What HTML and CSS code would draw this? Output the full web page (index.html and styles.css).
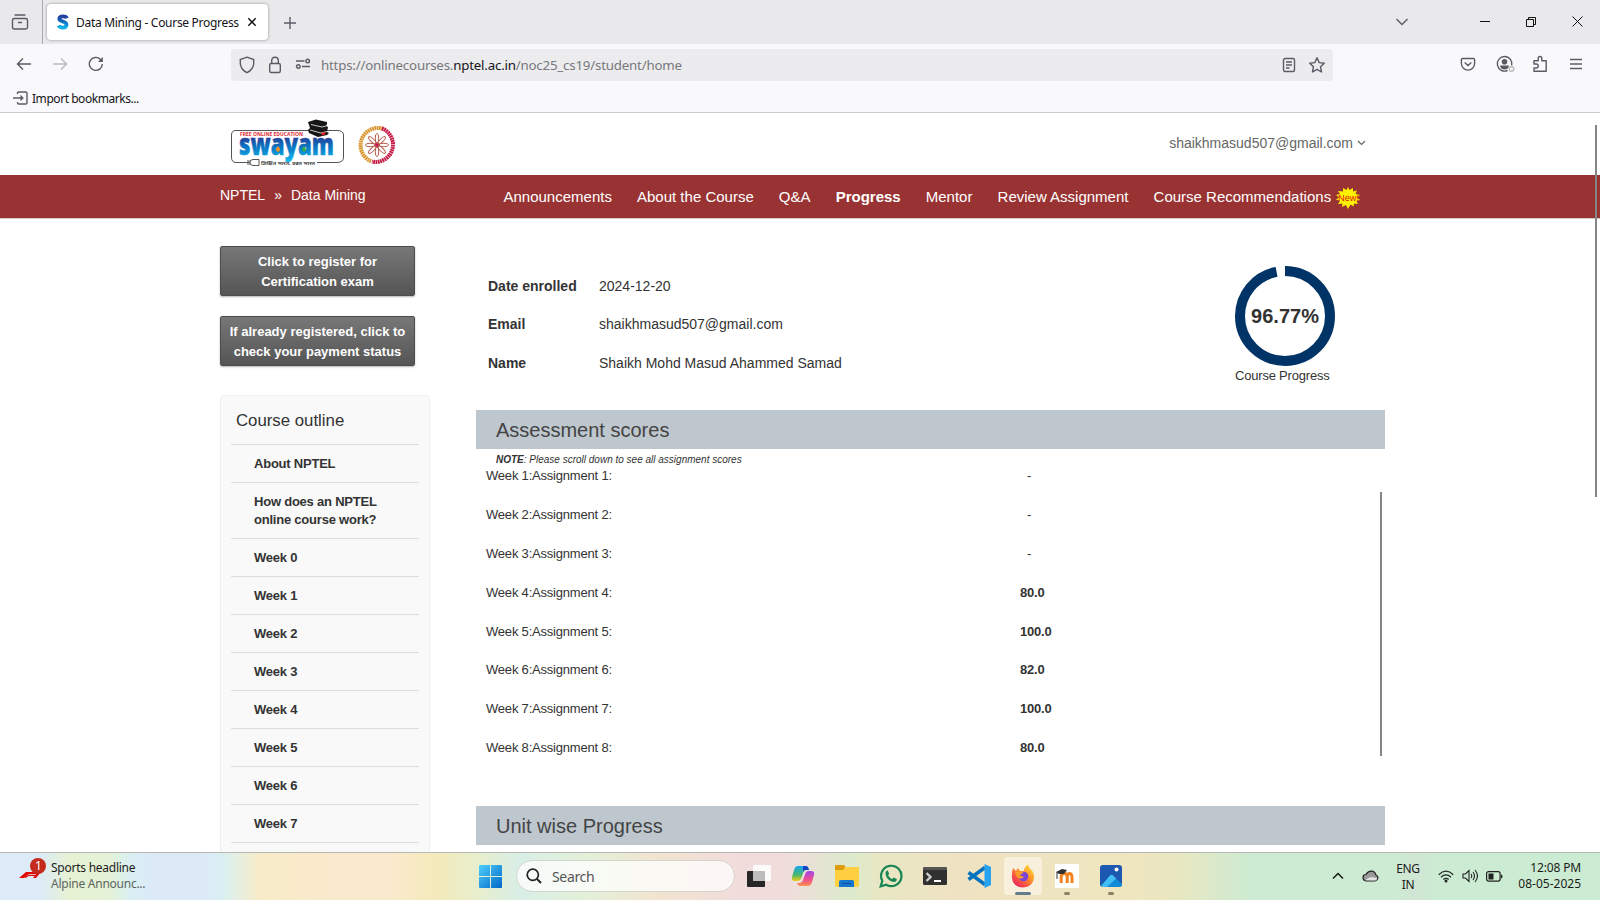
FILE: index.html
```html
<!DOCTYPE html>
<html lang="en">
<head>
<meta charset="utf-8">
<title>Data Mining - Course Progress</title>
<link rel="stylesheet" href="styles.css">
</head>
<body>
<div class="screen">
  <div class="tabbar">
    <div class="tabview"><svg width="18" height="18" viewBox="0 0 18 18" class="ln"><path d="M4 2h10M3.200 5.500h11.600q1.700 0 1.700 1.700v7.100q0 1.700-1.700 1.700H3.200q-1.700 0-1.700-1.700V7.200q0-1.700 1.700-1.700zM7.500 9.500h3" stroke-linecap="round"/></svg></div>
    <div class="tab">
      <svg width="14" height="18" viewBox="0 0 14 18"><defs><linearGradient id="sg" x2="0" y2="1"><stop offset="0" stop-color="#2b3f9f"/><stop offset=".5" stop-color="#0c70c0"/><stop offset="1" stop-color="#10b4ec"/></linearGradient></defs><path d="M11 5.200C10 3 4 2.300 3.300 5.500C2.800 9 11 8 10.500 12C10 15.500 4 15.300 2.600 12.500" fill="none" stroke="url(#sg)" stroke-width="3.800"/></svg>
      <span class="ui tabtitle">Data Mining - Course Progress</span>
      <svg class="tabx" width="10" height="10" viewBox="0 0 10 10"><path d="M1.300 1.300l7.400 7.400M8.700 1.300L1.300 8.700" stroke="#111" stroke-width="1.400"/></svg>
    </div>
    <svg class="plus ln" width="12" height="12" viewBox="0 0 12 12"><path d="M6 0v12M0 6h12"/></svg>
    <div class="wincontrols">
      <svg width="14" height="8" viewBox="0 0 14 8" class="ln"><path d="M1.500 1l5.500 5.500L12.500 1"/></svg>
      <svg width="10" height="10" viewBox="0 0 10 10" class="bk"><path d="M0 4.500h10"/></svg>
      <svg width="10" height="10" viewBox="0 0 10 10" class="bk"><path d="M.5 2.500h7v7h-7zM2.500 2V.5h7v7H8"/></svg>
      <svg width="11" height="11" viewBox="0 0 11 11" class="bk"><path d="M.5 .5l10 10M10.500 .5l-10 10"/></svg>
    </div>
  </div>
  <div class="toolbar">
    <div class="navbtns">
      <svg width="16" height="14" viewBox="0 0 16 14" class="ln"><path d="M15 7H1.500M7 1.500L1.500 7L7 12.500"/></svg>
      <svg width="16" height="14" viewBox="0 0 16 14" class="ln dim"><path d="M1 7h13.500M9 1.500L14.500 7L9 12.500"/></svg>
      <svg width="16" height="16" viewBox="0 0 16 16" class="ln"><path d="M14.300 8A6.500 6.500 0 1 1 12.500 3.400L14 5"/><path d="M14.800 1v4.900H10z" fill="#5b5b66" stroke="none"/></svg>
    </div>
    <div class="urlbar">
      <svg width="16" height="18" viewBox="0 0 16 18" class="ln"><path d="M8 1.200L14.700 3.600V7.500C14.700 11 12 15 8 16.700C4 15 1.300 11 1.300 7.500V3.600z"/></svg>
      <svg width="14" height="18" viewBox="0 0 14 18" class="ln"><rect x="1.700" y="7.500" width="10.600" height="9" rx="1.500"/><path d="M3.700 7.500V4.700Q3.700 1.300 7 1.300T10.300 4.700V7.500"/></svg>
      <svg class="perm ln" width="16" height="12" viewBox="0 0 16 12"><path d="M1 3h8.500M7 8.500h8"/><circle cx="12.700" cy="3" r="1.800"/><circle cx="3.300" cy="8.500" r="1.800"/></svg>
      <span class="ui url">https://onlinecourses.<b>nptel.ac.in</b>/noc25_cs19/student/home</span>
      <span class="urlend">
        <svg width="14" height="16" viewBox="0 0 14 16" class="ln"><rect x="1.500" y="1.500" width="11" height="13" rx="1.500"/><path d="M4 5h6M4 8h6M4 11h3.500"/></svg>
        <svg width="18" height="18" viewBox="0 0 18 18" class="ln"><path d="M9 1.700l2.200 4.900 5.100.6-3.800 3.500 1 5.300L9 13.300 4.500 16l1-5.300L1.700 7.200l5.100-.6z" stroke-linejoin="round"/></svg>
      </span>
    </div>
    <div class="toolend">
      <svg width="16" height="15" viewBox="0 0 16 15" class="ln"><path d="M2.700 1.500h10.600q1.300 0 1.300 1.300V6.500a6.600 6.600 0 0 1-13.200 0V2.800q0-1.300 1.300-1.300zM4.700 5.500L8 8.500l3.300-3"/></svg>
      <svg width="19" height="18" viewBox="0 0 19 18" class="ln"><path d="M11.500 15.500A7.300 7.300 0 1 1 15.700 10.500"/><circle cx="8.500" cy="6.700" r="2.800" fill="#5b5b66" stroke="none"/><path d="M4 10.500h9q-.5 4-4.500 4T4 10.500z" fill="#5b5b66" stroke="none"/><circle cx="15.500" cy="14" r="2.300" stroke="#bbb"/></svg>
      <svg class="ext ln" width="16" height="18" viewBox="0 0 16 18"><path d="M2 9V5.700h4.200V3.500Q6.200 1.500 8 1.500T9.800 3.500V5.700H14.200V16.300H2V13H4.300Q6.200 13 6.200 11T4.300 9z" stroke-linejoin="round"/></svg>
      <svg width="12" height="12" viewBox="0 0 12 12" class="ln"><path d="M0 1.500h12M0 6h12M0 10.500h12"/></svg>
    </div>
  </div>
  <div class="bookmarks">
    <svg width="15" height="14" viewBox="0 0 15 14" class="ln"><path d="M4.500 3V2.200Q4.500 1 5.700 1h7Q14 1 14 2.200v9.600Q14 13 12.700 13h-7Q4.500 13 4.500 11.800V11M0 7h9"/><path d="M7.500 3.800L10.800 7L7.500 10.200z" fill="#5b5b66" stroke="none"/></svg>
    <span class="ui bmtext">Import bookmarks...</span>
  </div>

  <div class="page">
    <div class="pagescroll"></div>
    <header class="header">
      <div class="logos">
        <svg class="swayam" width="116" height="50" viewBox="0 0 116 50">
          <defs><linearGradient id="sw" gradientUnits="userSpaceOnUse" x1="0" y1="19" x2="0" y2="42"><stop offset="0" stop-color="#263f98"/><stop offset=".45" stop-color="#0978c4"/><stop offset="1" stop-color="#13b3e8"/></linearGradient></defs>
          <path d="M80 12.500H7Q2.500 12.500 2.500 17V39Q2.500 44.500 7 44.500H18M88 44.500H108Q114.500 44.500 114.500 39V17Q114.500 12.500 108 12.500H98" fill="none" stroke="#555"/>
          <text x="11" y="18" class="swsmall" textLength="63" lengthAdjust="spacingAndGlyphs">FREE ONLINE EDUCATION</text>
          <text x="10" y="37" class="swbig" textLength="95" lengthAdjust="spacingAndGlyphs" fill="url(#sw)" stroke="url(#sw)">swayam</text>
          <path d="M49 28q4 4.500 0 6-4-1.500 0-6z" fill="#f68b1f"/><path d="M75 28q4 4.500 0 6-4-1.500 0-6z" fill="#2dab4f"/>
          <path d="M18 44.500h3M30 41.500h-6q-3 0-3 3t3 3h6zM18 43h3M18 46h3" fill="#fff" stroke="#555"/>
          <text x="32" y="46.500" class="swtag" textLength="54" lengthAdjust="spacingAndGlyphs">शिक्षित भारत, उन्नत भारत</text>
          <path d="M79 4l8-2.500 11 2.500v2l-1 2 2 1-1 5 2 1-2 2-9 2-9-4-1-3 2-2z" fill="#161616"/><path d="M82 6.500l11 2.500 4-1M81 12l11 3 6-1.500" stroke="#ddd" fill="none" stroke-width=".9"/><path d="M92 15l5-1-1 2.500-3 1z" fill="#d22"/>
        </svg>
        <svg width="40" height="42" viewBox="-20 -21 40 42">
          <path d="M6 -16.300A17.400 17.400 0 0 0 -6 16.300" fill="none" stroke="#d8952f" stroke-width="4" stroke-dasharray="1.800 .5"/>
          <path d="M5 -16.600A17.400 17.400 0 0 1 -5 16.600" fill="none" stroke="#c51b45" stroke-width="4" stroke-dasharray="1.800 .5"/>
          <g fill="none" stroke="#b5604a" stroke-width="1"><g id="pt"><ellipse cy="-6.800" rx="1.700" ry="4.800"/><ellipse cy="6.800" rx="1.700" ry="4.800"/></g><use href="#pt" transform="rotate(45)"/><use href="#pt" transform="rotate(90)"/><use href="#pt" transform="rotate(135)"/></g><circle r="2" fill="#c51b45"/>
        </svg>
      </div>
      <div class="account">shaikhmasud507@gmail.com<svg width="9" height="6" viewBox="0 0 9 6"><path d="M1 1l3.500 3.500L8 1" fill="none" stroke="#666" stroke-width="1.200"/></svg></div>
    </header>
    <nav class="nav">
      <div class="crumbs"><span>NPTEL</span><span class="sep">»</span><span>Data Mining</span></div>
      <div class="links"><span>Announcements</span><span>About the Course</span><span>Q&amp;A</span><b>Progress</b><span>Mentor</span><span>Review Assignment</span><span>Course Recommendations</span>
        <svg class="new" width="24" height="22" viewBox="0 0 24 22"><path d="M12 0l1.500 3L17 1v3.500l4-1-1.500 3.500L24 8l-3 2.500 3 2.500-3.500 1L22 17l-4-.5-.5 3-3-2L12 22l-2-4-4 2 .5-3.500-4.500.5L4 14 0 12.500 3 10.500 0 8l4-1L2 4l5 .5V1l3.500 2z" fill="#fff200"/><text x="2" y="14" textLength="21" lengthAdjust="spacingAndGlyphs">New!</text></svg>
      </div>
    </nav>
    <div class="content">
      <aside class="side">
        <div class="btn">Click to register for<br>Certification exam</div>
        <div class="btn">If already registered, click to<br>check your payment status</div>
        <div class="outline">
          <h3>Course outline</h3>
          <div class="item">About NPTEL</div>
          <div class="item">How does an NPTEL<br>online course work?</div>
          <div class="item">Week 0</div>
          <div class="item">Week 1</div>
          <div class="item">Week 2</div>
          <div class="item">Week 3</div>
          <div class="item">Week 4</div>
          <div class="item">Week 5</div>
          <div class="item">Week 6</div>
          <div class="item">Week 7</div>
          <div class="item"></div>
        </div>
      </aside>
      <main class="main">
        <div class="profile">
          <div class="details">
            <b>Date enrolled</b><span>2024-12-20</span>
            <b>Email</b><span>shaikhmasud507@gmail.com</span>
            <b>Name</b><span>Shaikh Mohd Masud Ahammed Samad</span>
          </div>
          <div class="progress">
            <svg width="100" height="100" viewBox="0 0 100 100"><circle cx="50" cy="50" r="45" fill="none" stroke="#036" stroke-width="10" pathLength="100" stroke-dasharray="97 3" transform="rotate(-90 50 50)"/><text x="50" y="57" text-anchor="middle">96.77%</text></svg>
            <div class="caption">Course Progress</div>
          </div>
        </div>
        <h2>Assessment scores</h2>
        <div class="note"><b>NOTE</b>: Please scroll down to see all assignment scores</div>
        <div class="scores">
          <div class="rows">
            <div class="row"><span>Week 1:Assignment 1:</span><span class="dash">-</span></div>
            <div class="row"><span>Week 2:Assignment 2:</span><span class="dash">-</span></div>
            <div class="row"><span>Week 3:Assignment 3:</span><span class="dash">-</span></div>
            <div class="row"><span>Week 4:Assignment 4:</span><b>80.0</b></div>
            <div class="row"><span>Week 5:Assignment 5:</span><b>100.0</b></div>
            <div class="row"><span>Week 6:Assignment 6:</span><b>82.0</b></div>
            <div class="row"><span>Week 7:Assignment 7:</span><b>100.0</b></div>
            <div class="row"><span>Week 8:Assignment 8:</span><b>80.0</b></div>
          </div>
          <div class="scroll"></div>
        </div>
        <h2>Unit wise Progress</h2>
      </main>
    </div>
  </div>

  <div class="taskbar">
    <div class="news">
      <svg width="30" height="24" viewBox="0 0 30 24"><path d="M0 20L7 14H22L17 20H14L17 16H10L5 20z" fill="#e10600"/><path d="M6 19.500L10 17.300H16" stroke="#e10600" fill="none" stroke-width="1.200"/><circle cx="19" cy="8" r="8" fill="#c42b1c"/><text x="19.500" y="12" text-anchor="middle">1</text></svg>
      <div class="ui newstext"><div>Sports headline</div><div class="sub">Alpine Announc...</div></div>
    </div>
    <div class="apps">
      <svg width="23" height="23" viewBox="0 0 23 23"><defs><linearGradient id="wg" x2="1" y2="1"><stop offset="0" stop-color="#4fd0fb"/><stop offset="1" stop-color="#0067c8"/></linearGradient></defs><path d="M0 1q0-1 1-1h10v11H0zM12 0h10q1 0 1 1v10H12zM0 12h11v11H1q-1 0-1-1zM12 12h11v10q0 1-1 1H12z" fill="url(#wg)"/></svg>
      <div class="search"><svg width="16" height="16" viewBox="0 0 16 16"><circle cx="6.800" cy="6.800" r="5.600" fill="none" stroke="#222" stroke-width="1.700"/><path d="M11 11l4 4" stroke="#222" stroke-width="2"/></svg><span class="ui">Search</span></div>
      <svg class="a1" width="24" height="24" viewBox="0 0 24 24"><rect y="7" width="18" height="16" rx="1" fill="#262626"/><rect x="6" y="1" width="18" height="16" rx="1" fill="#fff" fill-opacity=".85"/><rect x="6" y="7" width="12" height="10" fill="#bdbdbd"/></svg>
      <svg class="a2" width="24" height="22" viewBox="0 0 24 22"><defs><linearGradient id="c1" x2="0" y2="1"><stop offset="0" stop-color="#18a5f2"/><stop offset=".6" stop-color="#49b96b"/><stop offset="1" stop-color="#f2cc15"/></linearGradient><linearGradient id="c2" x2="0" y2="1"><stop offset="0" stop-color="#a047e8"/><stop offset=".6" stop-color="#f0518c"/><stop offset="1" stop-color="#f9944b"/></linearGradient></defs><path d="M7 1h8q2 0 3 4h-3q-2 0-3 3L10 14Q9 16 6 16H4Q0 16 1 12L3 5Q4 1 7 1z" fill="url(#c1)"/><path d="M12 1h3q2 0 3 4h-4q-1.500 0-2 2z" fill="#1745c8"/><path d="M17 21H9q-2 0-3-3h3q2 0 3-3l2.500-7Q15 6 18 6h2q4 0 3 4L21 17q-1 4-4 4z" fill="url(#c2)"/></svg>
      <svg class="a3" width="24" height="22" viewBox="0 0 24 22"><path d="M0 4h9l2-2h12q1 0 1 1v17q0 2-2 2H2q-2 0-2-2z" fill="#ffcf3f"/><path d="M1 0h8l1.500 1.500L8.500 5H0V1q0-1 1-1z" fill="#dd9c0c"/><path d="M4 22v-5q0-2 2-2h11q2 0 2 2v5z" fill="#1675cc"/><path d="M7 18.500h9" stroke="#0c50a0"/></svg>
      <svg class="a4" width="24" height="24" viewBox="0 0 24 24"><path d="M1.700 22.300l1.600-5.500A10.200 10.200 0 1 1 7.200 20.800z" fill="none" stroke="#198653" stroke-width="2.200"/><path d="M8.700 6.600l1.500 3.200-1.100 1.500q1.500 2.700 4.100 3.800l1.500-1.600 3.100 1.500q.2 3-3.300 3Q7.500 16.500 6.500 10 6.300 7 8.700 6.600z" fill="#198653"/></svg>
      <svg class="a5" width="24" height="18" viewBox="0 0 24 18"><rect width="24" height="18" rx="1.500" fill="#303030"/><path d="M0 1.500Q0 0 1.500 0h21Q24 0 24 1.500V3H0z" fill="#555"/><path d="M3.500 6l4 4-4 4" fill="none" stroke="#ccc" stroke-width="2.400"/><path d="M11 14h7" stroke="#fff" stroke-width="2"/></svg>
      <svg class="a6" width="24" height="24" viewBox="0 0 24 24"><path d="M1.500 8.500L18 20.500M1.500 15.500L18 3.500" stroke="#0873bd" stroke-width="3.600"/><path d="M17.500 0L24 3v18l-6.500 3z" fill="#26a3ee"/></svg>
      <div class="active"><svg width="24" height="24" viewBox="0 0 24 24"><defs><linearGradient id="ff" x1="1" x2=".2" y2="1"><stop offset="0" stop-color="#fff04a"/><stop offset=".45" stop-color="#ff9425"/><stop offset="1" stop-color="#ed1c61"/></linearGradient></defs><path d="M2 4l3 3 2-3 2 3 4 0q0-4 4-6.500 1 4 4 6 2.500 3 2 7.500Q21.500 23 12 23.500 2 23 1 14 .5 8 2 4z" fill="url(#ff)"/><circle cx="12.500" cy="12.500" r="4.800" fill="#7b45d7"/><path d="M4 8q5-2 9 1-3 0-4 3 3 0 4 1-3 3-7 0z" fill="#ff9b28"/></svg><i></i></div>
      <div class="moodle"><svg width="24" height="24" viewBox="0 0 24 24"><rect width="24" height="24" fill="#fff"/><path d="M6.200 19v-6q0-3.500 3-3.500t3 3.500v6m0-6q0-3.500 2.300-3.500t2.500 3.500v6" fill="none" stroke="#f58220" stroke-width="3"/><path d="M1 8l6-3 5 1-3 4H4z" fill="#333"/><path d="M2 8v7" stroke="#333"/></svg><i></i></div>
      <div class="photos"><svg width="22" height="22" viewBox="0 0 22 22"><rect width="22" height="22" rx="3" fill="#1c58b0"/><path d="M1 21L10 10.500q1.500-1.700 3 0L22 19q0 3-3 3H3q-1.500 0-2-1z" fill="#148bd8"/><path d="M1 21L10 10.500q1.500-1.700 3 0l3 3L7 22H3q-1.500 0-2-1z" fill="#43bdf3"/><circle cx="16.500" cy="4.500" r="2" fill="#fff"/></svg><i></i></div>
    </div>
    <div class="tray ui">
      <svg width="12" height="8" viewBox="0 0 12 8" class="bk"><path d="M1 6.500l5-5 5 5" stroke-width="1.400"/></svg>
      <svg class="t2" width="17" height="12" viewBox="0 0 17 12"><path d="M4 11Q1 10.500 1 7.500T4 4.500Q6 1 9.500 1.200T14 5Q16.200 6 16 8t-3 3z" fill="#999" stroke="#222" stroke-width="1.200"/><path d="M3 10.300Q6 7.500 10 7l5 1.200q0 2.200-2 2.200z" fill="#e2e2e2"/></svg>
      <div class="lang">ENG<br>IN</div>
      <svg class="t3" width="16" height="13" viewBox="0 0 16 13"><g fill="none" stroke="#222" stroke-width="1.200"><path d="M.7 4.700Q8-2.300 15.300 4.700M3 7.200Q8 2.700 13 7.200M5.300 9.500Q8 7.200 10.700 9.500"/></g><circle cx="8" cy="11" r="1.500" fill="#222"/></svg>
      <svg class="t4" width="17" height="14" viewBox="0 0 17 14"><path d="M1 5h2.500L7 1.500v11L3.500 9H1zM9 5q1.500 2 0 4M11 3q3 4 0 8M13 1q5 6 0 12" fill="none" stroke="#222" stroke-width="1.100"/></svg>
      <svg class="t5" width="17" height="11" viewBox="0 0 17 11"><rect x=".6" y=".6" width="13.500" height="9.500" rx="2" fill="none" stroke="#222" stroke-width="1.200"/><path d="M2.500 2.500h5v6h-5zM15 3.500q1.500 0 1.500 2t-1.500 2z" fill="#222"/></svg>
      <div class="clock">12:08 PM<br><span>08-05-2025</span></div>
    </div>
  </div>
</div>
</body>
</html>
```

FILE: styles.css
```css
* { box-sizing: border-box; }
body { margin: 0; font-family: "Liberation Sans", Arial, sans-serif; color: #333; }
svg { display: block; flex: none; }
.screen { width: 1600px; height: 900px; overflow: hidden; display: flex; flex-direction: column; background: #fff; }
.ui { font-family: "Noto Sans", "Open Sans", sans-serif; white-space: nowrap; }
.ln { fill: none; stroke: #5b5b66; stroke-width: 1.4; }
.ln.dim { stroke: #bbbbc0; }
.bk { fill: none; stroke: #111; stroke-width: 1; }

/* Browser chrome */
.tabbar { height: 44px; flex: none; background: #e9e9eb; display: flex; align-items: flex-start; }
.tabview { width: 43px; height: 44px; border-right: 1px solid #aaaaae; padding: 13px 0 0 11px; }
.tab { margin: 4px 0 0 4px; width: 221px; height: 36px; background: #fff; border-radius: 4px; box-shadow: 0 0 3px rgba(0,0,0,.4); display: flex; align-items: center; padding-left: 9px; }
.tabtitle { font-size: 12px; letter-spacing: -.3px; color: #15141a; margin-left: 6px; width: 164px; }
.tabx { margin-left: 7px; }
.plus { margin: 17px 0 0 16px; }
.wincontrols { margin-left: auto; display: flex; align-items: center; height: 43px; padding-right: 17px; }
.wincontrols svg:nth-child(2) { margin-left: 71px; }
.wincontrols svg:nth-child(3) { margin-left: 36px; }
.wincontrols svg:nth-child(4) { margin-left: 36px; }
.toolbar { height: 40px; flex: none; background: #f9f9fb; display: flex; align-items: center; }
.navbtns { display: flex; align-items: center; gap: 20px; width: 231px; padding-left: 16px; }
.urlbar { width: 1102px; height: 32px; margin-top: 1px; border-radius: 4px; background: #ececee; display: flex; align-items: center; gap: 13px; padding-left: 8px; }
.perm { margin-top: -1px; }
.url { font-size: 13.300px; letter-spacing: -.2px; color: #77777c; margin-left: -3px; }
.url b { font-weight: 400; color: #15141a; }
.urlend { margin-left: auto; display: flex; align-items: center; gap: 12px; padding-right: 7px; }
.toolend { margin-left: auto; display: flex; align-items: center; gap: 20px; padding-right: 18px; }
.ext { margin: 0 2px 0 -3px; }
.bookmarks { height: 29px; flex: none; background: #f9f9fb; border-bottom: 1px solid #ccc; display: flex; align-items: center; padding-left: 13px; gap: 4px; }
.bmtext { font-size: 12px; letter-spacing: -.45px; color: #15141a; }

/* Web page */
.page { height: 739px; flex: none; overflow: hidden; position: relative; }
.pagescroll { position: absolute; left: 1595px; top: 12px; width: 2px; height: 372px; background: #858585; }
.header { height: 62px; display: flex; justify-content: space-between; padding: 5px 234px 0 229px; }
.logos { display: flex; gap: 12px; }
.logos svg:nth-child(2) { margin-top: 6px; }
.swayam { overflow: visible; }
.swsmall { font: bold 5px "Open Sans", sans-serif; fill: #e0262d; }
.swbig { font: 800 30px "Open Sans", sans-serif; stroke-width: .5px; }
.swtag { font: bold 5px "Noto Sans", sans-serif; fill: #444; }
.account { font-size: 14px; color: #666; display: flex; align-items: center; gap: 4px; height: 50px; }
.nav { height: 44px; background: #993333; border-bottom: 1px solid #ccc; color: #fff; display: flex; padding-left: 220px; white-space: nowrap; }
.crumbs { width: 283.500px; font-size: 14px; line-height: 40px; display: flex; }
.sep { margin: 0 9px; }
.links { display: flex; font-size: 15px; line-height: 44px; gap: 25.100px; }
.new { margin: 12px 0 0 -20.500px; }
.new text { font: 8.500px "Liberation Sans", sans-serif; fill: #e01010; }
.content { display: flex; }
.side { width: 210px; margin-left: 220px; padding-top: 27px; }
.btn { width: 195px; height: 50px; margin-bottom: 20px; border: 1px solid #4d4d4d; border-radius: 2px; background: linear-gradient(#777, #555); color: #fff; font: bold 13px/20px "Liberation Sans", sans-serif; text-align: center; padding-top: 5px; white-space: nowrap; box-shadow: 0 1px 2px rgba(0,0,0,.3); }
.outline { margin-top: 29px; border: 1px solid #f0f0f0; border-radius: 4px 4px 0 0; background: #f9f9f9; padding: 0 10px; }
.outline h3 { margin: 0; height: 48px; font: 16.800px/50px "Liberation Sans", sans-serif; padding-left: 5px; }
.item { border-top: 1px solid #ddd; padding: 10px 0 9px 23px; min-height: 38px; font: bold 13px/18px "Liberation Sans", sans-serif; letter-spacing: -.22px; }
.main { width: 909px; margin-left: 46px; }
.profile { height: 191px; display: flex; justify-content: space-between; padding: 47px 50px 0 12px; }
.details { display: grid; grid-template-columns: 111px auto; grid-template-rows: 38px 39px 38px; font-size: 14px; line-height: 40px; align-content: start; white-space: nowrap; }
.progress { font-size: 13px; line-height: 20px; }
.caption { letter-spacing: -.2px; }
.progress text { font: bold 20px "Liberation Sans", sans-serif; fill: #333; }
h2 { margin: 0; height: 39px; background: #bfc7ce; color: #444; font-weight: 400; font-size: 20px; line-height: 41px; padding-left: 20px; }
.note { font-size: 10px; font-style: italic; line-height: 12px; padding: 5px 0 0 20px; height: 17px; }
.scores { display: flex; height: 340px; }
.rows { width: 904px; padding-left: 10px; font-size: 13px; }
.row { display: grid; grid-template-columns: 534px auto; height: 38.880px; line-height: 20px; letter-spacing: -.2px; }
.dash { padding-left: 7px; }
.scroll { width: 2px; height: 264px; margin-top: 26px; background: #858585; }

/* Taskbar */
.taskbar { height: 48px; flex: none; border-top: 1px solid #b8b8b4; display: flex; background: linear-gradient(90deg, #dcebf7 0, #dcebf7 40px, #e7f2d3 70px, #e4f2d8 110px, #d9f0f2 130px, #dceaf8 150px, #dceaf8 205px, #d9f0f2 222px, #f8ecc8 260px, #faeacd 330px, #faeacd 390px, #f4eabb 435px, #e8eecb 475px, #d9efe6 520px, #e4f0d8 590px, #f2e3d0 660px, #f1dcdc 740px, #f1dcdc 785px, #dbeacc 850px, #e8e7c4 878px, #efe2c2 960px, #efe6bf 1130px, #e8e7c2 1180px, #cdebd2 1250px, #cdebd2 1395px, #d0e5d4 1415px, #cbecd2 1440px, #cbecd2 1600px); }
.news { width: 479px; display: flex; padding: 5px 0 0 19px; }
.news text { font: 12px "Noto Sans", sans-serif; fill: #fff; }
.newstext { font-size: 12px; line-height: 16px; color: #1c1c1c; padding-left: 2px; margin-top: 2px; letter-spacing: -.25px; }
.sub { color: #5c6560; }
.apps { display: flex; align-items: center; width: 853px; padding-bottom: 1px; }
.search { width: 219px; height: 32px; margin-left: 14px; border: 1px solid #d3d6cc; border-radius: 16px; background: rgba(255,255,255,.75); display: flex; align-items: center; padding-left: 9px; gap: 10px; font-size: 14px; color: #555; letter-spacing: -.35px; }
.a1 { margin-left: 12px; }
.a2 { margin-left: 20px; }
.a3 { margin-left: 20px; }
.a4, .a5, .a6 { margin-left: 20px; }
.active { margin-left: 13px; width: 38px; height: 38px; border-radius: 4px; background: #f8f0dd; display: flex; flex-direction: column; align-items: center; padding-top: 7px; }
.active i { width: 16px; height: 3px; border-radius: 2px; background: #647b8c; margin-top: 4px; }
.moodle, .photos { height: 38px; display: flex; flex-direction: column; align-items: center; padding-top: 7px; margin-left: 13px; }
.photos { margin-left: 21px; padding-top: 8px; }
.photos i, .moodle i { width: 6px; height: 3px; border-radius: 2px; background: #8b8164; margin-top: 4px; }
.photos i { margin-top: 5px; }
.tray { display: flex; align-items: center; font-size: 12px; line-height: 16px; color: #1c1c1c; flex: 1; padding: 0 19px 1px 0; }
.t2 { margin-left: 18px; }
.lang { width: 26px; margin-left: 16px; text-align: center; letter-spacing: -.4px; padding-top: 1px; }
.t3 { margin-left: 17px; }
.t4 { margin-left: 8px; }
.t5 { margin-left: 7px; }
.clock { margin-left: auto; text-align: right; letter-spacing: -.15px; }
.clock span { letter-spacing: 0; }
```
